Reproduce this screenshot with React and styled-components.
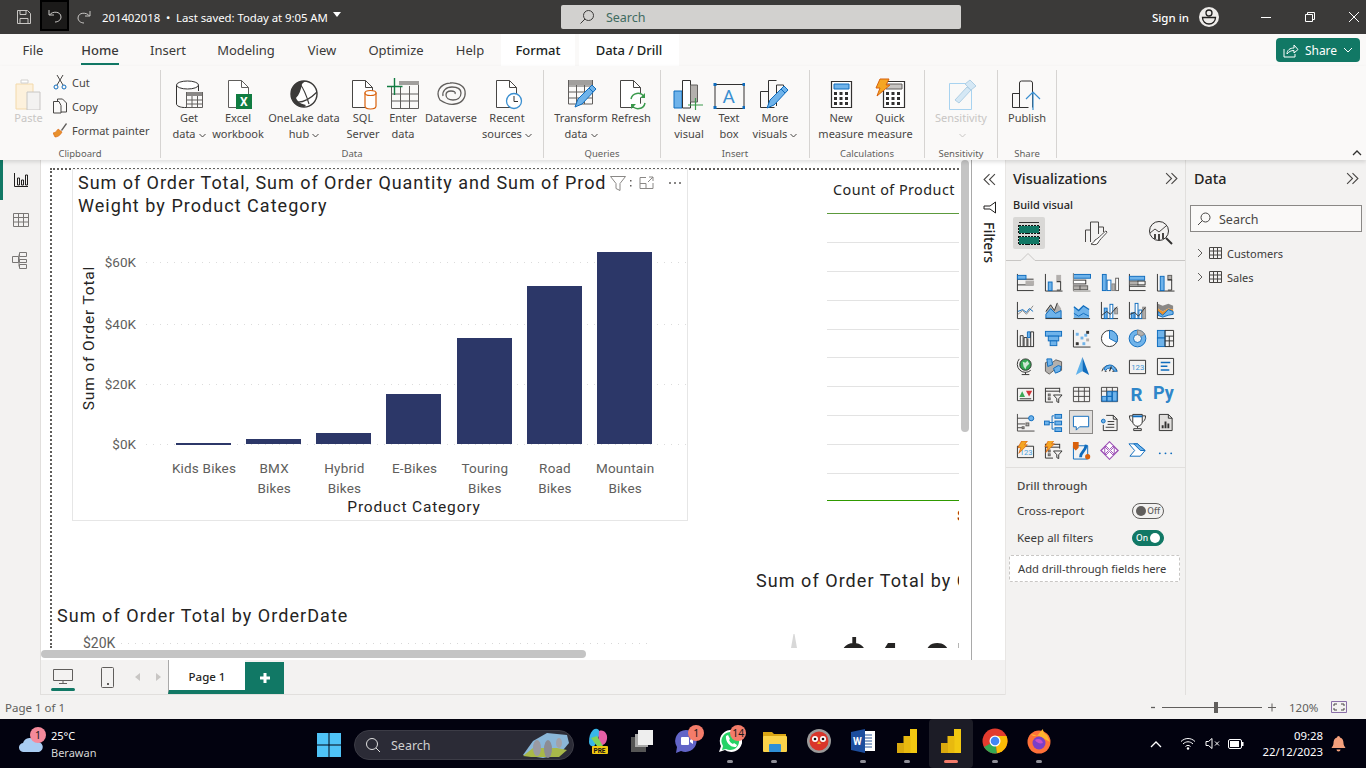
import React from 'react';
import styled, { createGlobalStyle } from 'styled-components';

const Global = createGlobalStyle`
  html, body { margin: 0; padding: 0; background: #f3f2f1; }
  body { font-family: "Noto Sans", "Open Sans", sans-serif; color: #252423; overflow: hidden; }
  * { box-sizing: border-box; }
`;
const D = '#323130', B = '#6fb3ea', BD = '#0f6cbd', G = '#b3b0ad', GREEN = '#117865';
const Din = `Roboto, "Liberation Sans", sans-serif`;

const Page = styled.div`width:1366px;height:768px;display:flex;flex-direction:column;overflow:hidden;`;

/* ---------- title bar ---------- */
const TitleBar = styled.header`height:34px;flex:none;background:#3b3a39;color:#fff;display:flex;align-items:flex-start;position:relative;`;
const TitleIcon = styled.div`width:${p => p.$w}px;height:${p => p.$h || 34}px;margin-left:${p => p.$ml || 0}px;display:flex;align-items:center;justify-content:center;flex:none;
  ${p => p.$on ? 'background:#1b1a19;border:2px solid #000;' : ''}`;
const DocTitle = styled.div`margin-left:10px;width:246px;height:34px;display:flex;align-items:center;font-size:11.4px;white-space:nowrap;letter-spacing:-.05px;`;
const Caret = styled.span`width:0;height:0;border-left:4.5px solid transparent;border-right:4.5px solid transparent;border-top:5px solid #fff;margin:-6px 0 0 5px;flex:none;`;
const TopSearch = styled.div`margin:5px 0 0 220px;width:400px;height:24px;background:#d2d1cf;border-radius:2px;display:flex;align-items:center;padding-left:18px;gap:11px;color:#3f6b60;font-size:12.5px;flex:none;`;
const TitleRight = styled.div`margin-left:191px;display:flex;align-items:center;height:34px;flex:none;`;
const SignIn = styled.span`font-size:11.5px;font-weight:500;white-space:nowrap;width:37px;`;
const WinBtn = styled.div`width:44px;height:34px;display:flex;align-items:center;justify-content:center;`;
const Avatar = styled.div`width:20px;height:20px;margin:0 25px 0 10px;`;

/* ---------- tabs ---------- */
const TabBar = styled.nav`height:32px;flex:none;background:#faf9f8;display:flex;padding-left:10px;position:relative;`;
const Tab = styled.div`width:${p => p.$w}px;margin-left:${p => p.$ml || 0}px;height:32px;display:flex;align-items:center;justify-content:center;font-size:13px;position:relative;
  font-weight:${p => p.$strong ? 500 : 400};color:${p => p.$ctx ? '#201f1e' : '#3b3a39'};
  background:${p => p.$ctx ? '#fff' : 'transparent'};`;
const TabLine = styled.span`position:absolute;left:25px;right:25px;bottom:1px;height:2px;background:${GREEN};`;
const ShareBtn = styled.button`position:absolute;left:1276px;top:4px;width:84px;height:24px;background:${GREEN};border:0;border-radius:4px;color:#fff;font:400 12px "Noto Sans",sans-serif;display:flex;align-items:center;justify-content:center;gap:6px;padding:0;`;

/* ---------- ribbon ---------- */
const Ribbon = styled.section`height:94px;flex:none;background:#faf9f8;display:flex;padding-top:4px;position:relative;z-index:2;box-shadow:0 2px 4px rgba(0,0,0,.13);`;
const Group = styled.div`width:${p => p.$w}px;height:88px;flex:none;border-right:1px solid #d6d4d2;display:flex;flex-direction:column;`;
const Row = styled.div`height:75px;display:flex;padding-left:${p => p.$pl || 0}px;`;
const GroupLabel = styled.div`height:13px;line-height:17px;text-align:center;font-size:9.5px;color:#605e5c;`;
const RBtn = styled.div`width:${p => p.$w}px;flex:none;display:flex;flex-direction:column;align-items:center;padding-top:8px;color:${p => p.$off ? '#c8c6c4' : '#484644'};font-size:11px;line-height:16px;white-space:nowrap;`;
const RIcon = styled.svg`width:32px;height:32px;flex:none;display:block;`;
const Chev = styled.svg`width:7px;height:5px;margin-left:3px;`;
const SmallCol = styled.div`display:flex;flex-direction:column;`;
const SmallBtn = styled.div`height:24px;display:flex;align-items:center;gap:5px;font-size:11px;color:#484644;white-space:nowrap;`;
const Collapse = styled.svg`position:absolute;left:1352px;top:84px;`;

/* ---------- main ---------- */
const Main = styled.main`height:535px;flex:none;display:flex;`;
const Rail = styled.aside`width:41px;flex:none;background:#f3f2f1;border-right:1px solid #e1dfdd;display:flex;flex-direction:column;`;
const RailItem = styled.div`height:40px;display:flex;align-items:center;justify-content:center;border-left:3px solid ${p => p.$on ? GREEN : 'transparent'};padding-right:1px;`;
const Center = styled.div`width:964px;flex:none;display:flex;flex-direction:column;`;
const Work = styled.div`height:500px;display:flex;background:#fff;`;
const Canvas = styled.div`width:931px;flex:none;position:relative;border-right:1px solid #a9a9a9;`;
const Clip = styled.div`position:absolute;left:0;top:0;width:918px;height:488px;overflow:hidden;`;
const Selection = styled.div`position:absolute;left:9px;top:8px;right:0;bottom:0;border-top:2px dotted #605e5c;border-left:2px dotted #605e5c;`;
const VisualCard = styled.article`position:absolute;left:31px;top:9px;width:616px;height:352px;background:#fff;border:1px solid #e6e6e6;border-top-color:#f2f2f2;display:flex;flex-direction:column;`;
const CardHead = styled.div`height:49px;padding:1px 0 0 5px;position:relative;flex:none;`;
const CardTitle = styled.div`width:529px;overflow:hidden;white-space:nowrap;font:400 18px/23px ${Din};letter-spacing:.96px;color:#252423;`;
const TitleLine2 = styled.span`letter-spacing:1.04px;`;
const HeadIcons = styled.div`position:absolute;left:536px;top:3px;display:flex;align-items:center;height:20px;`;
const HeadIcon = styled.svg`margin-left:${p => p.$ml || 0}px;flex:none;`;
const Chart = styled.svg`width:614px;height:301px;display:block;`;
const TableVisual = styled.div`position:absolute;left:786px;top:16px;width:132px;`;
const TableHead = styled.div`height:38px;padding:3px 0 0 6px;font-size:14.4px;line-height:22px;letter-spacing:.44px;border-bottom:1px solid #5c9a3c;white-space:nowrap;color:#252423;`;
const TableRow = styled.div`height:${p => p.$h || 29}px;border-bottom:1px solid #e3e3e3;`;
const TableTotal = styled.div`height:27px;border-bottom:1.5px solid #2f9a00;`;
const TotalCell = styled.div`height:30px;padding-left:130px;font:700 14px/30px ${Din};color:#8f2a10;overflow:hidden;white-space:nowrap;`;
const FloatTitle = styled.div`position:absolute;left:${p => p.$x}px;top:${p => p.$y}px;white-space:nowrap;font:400 18px/23px ${Din};letter-spacing:1.05px;color:#252423;`;
const AxisLabel = styled.div`position:absolute;left:42px;top:474px;font:400 14px/18px ${Din};color:#605e5c;`;
const GridDots = styled.div`position:absolute;left:80px;top:483px;width:530px;height:1px;background:repeating-linear-gradient(90deg,#d8d8d8 0 1px,transparent 1px 7px);`;
const BigNum = styled.div`position:absolute;left:798px;top:474px;font:700 50px/56px ${Din};letter-spacing:4px;color:#252423;white-space:nowrap;`;
const Tip = styled.svg`position:absolute;left:749px;top:474px;`;
const VScroll = styled.div`position:absolute;left:920px;top:0;width:8px;height:272px;background:#c4c4c4;border-radius:4px;`;
const HScroll = styled.div`position:absolute;left:0;top:490px;width:545px;height:8px;background:#c4c4c4;border-radius:4px;`;
const FilterPane = styled.div`width:33px;flex:none;background:#fff;display:flex;flex-direction:column;align-items:center;padding:13px 0 0 1px;`;
const FilterFunnel = styled.svg`margin-top:15px;flex:none;`;
const FilterLabel = styled.div`writing-mode:vertical-rl;font-size:14px;font-weight:500;margin-top:8px;color:#252423;`;
const PageBar = styled.div`height:35px;flex:none;background:#f3f2f1;display:flex;border-bottom:1px solid #e1dfdd;`;
const DeviceTab = styled.div`width:${p => p.$w}px;margin-left:${p => p.$ml || 0}px;height:34px;position:relative;display:flex;align-items:center;justify-content:center;flex:none;`;
const DeviceLine = styled.span`position:absolute;left:0;right:0;top:28px;height:3px;border-radius:2px;background:${GREEN};`;
const NavArrows = styled.div`width:40px;margin-left:14px;display:flex;justify-content:space-around;align-items:center;flex:none;`;
const PageTab = styled.div`width:77px;height:34px;background:#fff;border-left:1px solid #a9a9a9;border-bottom:4px solid ${GREEN};font-size:11.5px;font-weight:500;display:flex;align-items:center;justify-content:center;padding-top:3px;flex:none;`;
const AddTab = styled.div`width:39px;height:32px;margin-top:2px;background:${GREEN};display:flex;align-items:center;justify-content:center;flex:none;`;

/* ---------- panes ---------- */
const VizPane = styled.section`width:181px;flex:none;background:#f3f2f1;border-right:1px solid #e1dfdd;border-left:1px solid #e8e6e4;display:flex;flex-direction:column;`;
const PaneHead = styled.div`height:38px;display:flex;align-items:center;justify-content:space-between;padding:0 7px 1px ${p => p.$pl}px;font-size:14.4px;font-weight:500;color:#252423;`;
const BuildLabel = styled.div`font-size:11px;font-weight:500;height:19px;line-height:13px;padding-left:7px;color:#252423;`;
const ModeRow = styled.div`display:flex;padding-left:7px;height:32px;`;
const ModeBtn = styled.div`width:32px;height:32px;margin-left:${p => p.$ml || 0}px;display:flex;align-items:center;justify-content:center;border-radius:2px;background:${p => p.$on ? '#d9d8d6' : 'transparent'};flex:none;`;
const Notch = styled.svg`display:block;width:179px;height:12px;`;
const VizGrid = styled.div`display:grid;grid-template-columns:repeat(6,28px);grid-auto-rows:28px;padding:7px 0 0 5px;height:207px;flex:none;border-bottom:1px solid #e1dfdd;`;
const VizCell = styled.div`display:flex;align-items:center;justify-content:center;${p => p.$on ? 'background:#e1dfdd;border:1px solid #8a8886;width:24px;height:24px;margin:2px;' : ''}`;
const SectionHead = styled.div`padding:10px 0 0 11px;font-size:11.5px;font-weight:500;color:#484644;height:29px;`;
const OptionRow = styled.div`height:27px;display:flex;align-items:center;justify-content:space-between;padding:0 21px 0 11px;font-size:11.5px;color:#3b3a39;`;
const Toggle = styled.div`width:32px;height:16px;border-radius:8px;display:flex;align-items:center;justify-content:space-between;padding:0 3px;font-size:8.5px;font-weight:500;
  background:${p => p.$on ? GREEN : 'transparent'};color:${p => p.$on ? '#fff' : '#605e5c'};border:1px solid ${p => p.$on ? GREEN : '#605e5c'};`;
const Knob = styled.span`width:10px;height:10px;border-radius:50%;background:${p => p.$on ? '#fff' : '#605e5c'};flex:none;`;
const DropBox = styled.div`margin:4px 0 0 3px;width:171px;height:27px;background:#fff;border:1px dashed #c8c6c4;border-radius:2px;font-size:11.2px;color:#3b3a39;display:flex;align-items:center;padding-left:8px;white-space:nowrap;`;
const DataPane = styled.section`width:180px;flex:none;background:#f3f2f1;display:flex;flex-direction:column;`;
const DataSearch = styled.div`margin:7px 0 0 4px;width:172px;height:27px;border:1px solid #8a8886;background:#faf9f8;display:flex;align-items:center;padding:1px 0 0 6px;gap:8px;font-size:12.5px;color:#484644;`;
const Tree = styled.div`margin-top:9px;display:flex;flex-direction:column;`;
const TreeRow = styled.div`height:24px;display:flex;align-items:center;padding-left:11px;gap:5px;font-size:11px;color:#3b3a39;`;

/* ---------- status + taskbar ---------- */
const Status = styled.footer`height:24px;flex:none;background:#f3f2f1;display:flex;align-items:center;padding-left:5px;font-size:11.5px;color:#605e5c;position:relative;`;
const ZoomBar = styled.div`position:absolute;left:1150px;top:0;height:24px;display:flex;align-items:center;color:#605e5c;`;
const Slider = styled.div`width:100px;height:1px;background:#605e5c;margin:0 6px;position:relative;`;
const Thumb = styled.span`position:absolute;left:52px;top:-5px;width:4px;height:11px;background:#605e5c;`;
const Pct = styled.span`margin:0 0 0 12px;font-size:11.5px;width:42px;`;
const Taskbar = styled.div`height:49px;flex:none;background:#02020f;color:#fff;display:flex;align-items:center;position:relative;`;
const Weather = styled.div`width:317px;height:49px;flex:none;display:flex;align-items:center;padding-left:19px;gap:7px;position:relative;`;
const Badge = styled.span`position:absolute;left:${p => p.$x}px;top:${p => p.$y}px;min-width:16px;height:16px;padding:0 2px;border-radius:8px;background:${p => p.$c || '#f28b82'};color:#1b1a19;font-size:10.5px;line-height:16px;text-align:center;`;
const WeatherText = styled.div`font-size:11px;line-height:17px;`;
const WeatherSub = styled.div`color:#d6d6d6;`;
const StartBtn = styled.svg`width:24px;height:24px;flex:none;margin-top:2px;`;
const TaskSearch = styled.div`margin:3px 0 0 13px;width:220px;height:30px;border-radius:15px;background:#2b2b36;border:1px solid #3c3c46;display:flex;align-items:center;padding-left:10px;gap:10px;color:#d0d0d0;font-size:12.5px;position:relative;flex:none;`;
const SearchArt = styled.svg`position:absolute;right:2px;top:0;`;
const Dock = styled.div`display:flex;margin-left:2px;flex:none;`;
const DockItem = styled.div`width:44.1px;height:49px;position:relative;display:flex;align-items:center;justify-content:center;padding-bottom:5px;flex:none;
  ${p => p.$active ? 'background:#1c1c26;border-radius:4px;' : ''}`;
const DockDot = styled.span`position:absolute;left:50%;bottom:5px;height:3px;margin-left:${p => p.$active ? -7 : -3}px;width:${p => p.$active ? 14 : 6}px;border-radius:2px;background:${p => p.$active ? '#f47c6a' : '#8f8f98'};`;
const Tray = styled.div`position:absolute;left:1144px;top:0;width:222px;height:49px;display:flex;align-items:center;`;
const TrayIcon = styled.div`width:${p => p.$w || 24}px;display:flex;justify-content:center;flex:none;margin-left:${p => p.$ml || 0}px;`;
const Clock = styled.div`width:68px;text-align:right;font-size:11.4px;line-height:16px;margin-left:7px;flex:none;white-space:nowrap;`;

/* ---------- icon helpers ---------- */
const P = ({ d, c = D, w = 1, f = 'none' }) => <path d={d} fill={f} stroke={c} strokeWidth={w} />;
const R = ({ x, y, w, h, f = B, s = BD }) => <rect x={x + .5} y={y + .5} width={w} height={h} fill={f} stroke={s} />;
const V = ({ children, size = 19 }) => <svg width={size} height={size} viewBox="0 0 20 20">{children}</svg>;
const Ax = () => <P d="M1.5 1v17.5H19" />;
const Tx = ({ x, y, s, c, w = 700, f = 'Roboto, sans-serif', children }) => <text x={x} y={y} fontSize={s} fill={c} fontWeight={w} fontFamily={f}>{children}</text>;

const Bolt = ({ x = 0, y = 0 }) => <path transform={`translate(${x} ${y})`} d="M5 0h6L8 4h3L2 13l2-6H1z" fill="#f5a623" stroke="#d9610c" strokeWidth=".8" />;
const Card123 = () => <><P d="M1.5 5.5h17v12h-17z" /><Tx x="4" y="15" s="8" c="#4a9fdc" w="400">123</Tx></>;
const SlicerBase = () => <><P d="M1.5 3.5h15M1.5 6.5h15M1.5 3v15h8M16.5 3v5" /><R x={4} y={9} w={2} h={2} f={G} s="#605e5c" /><R x={4} y={13} w={2} h={2} f={G} s="#605e5c" /><P d="M10 10.5h9l-3.5 4v4l-2-1v-3z" /></>;

const vizIcons = [
  <V><P d="M1.5 1v18M1.5 6.5h17M1.5 18.5h17M1.5 12.5h17" /><R x={1} y={2} w={9} h={4} /><R x={10} y={8} w={8} h={4} f={G} s={G} /></V>,
  <V><P d="M1.5 1v18h18" /><R x={4} y={9} w={4} h={9} /><R x={13} y={2} w={4} h={7} f={G} s={G} /><P d="M13.5 9h4v9h-4" /></V>,
  <V><R x={1} y={1} w={18} h={4} /><R x={1} y={7} w={13} h={4} f="#fff" s="#323130" /><R x={1} y={13} w={7} h={4} f={G} s="#605e5c" /><R x={8} y={13} w={8} h={4} f={G} s="#605e5c" /><P d="M1.5 0v19h18" c="#8a8886" /></V>,
  <V><R x={2} y={1} w={4} h={17} /><R x={7} y={7} w={4} h={11} f="#fff" /><R x={12} y={11} w={3} h={7} f={G} s="#8a8886" /><R x={16} y={5} w={3} h={13} f="#fff" s="#605e5c" /></V>,
  <V><P d="M1.5 1v18M1.5 18.5h17" /><R x={1} y={3} w={16} h={4} /><R x={1} y={8} w={9} h={4} f={G} s="#605e5c" /><P d="M10 8.5h8v4h-8" /><P d="M1.5 14h17" /></V>,
  <V><P d="M1.5 1v18h18" /><R x={4} y={3} w={4} h={15} /><R x={12} y={2} w={4} h={5} f={G} s="#605e5c" /><P d="M12.5 7h4v11h-4" /></V>,
  <V><Ax /><P d="M2 14l5-4 4 4 7-9" c="#8a8886" /><P d="M2 11l5-2 4 3 3-4 4 3" c={BD} /></V>,
  <V><path d="M2 18V10l5-6 4 6 3-8 4 6v10z" fill={G} /><path d="M2 18v-4l5-6 5 5 6-3v8z" fill={B} stroke={BD} /><P d="M1.5 18.5H19" /><P d="M2 11l5-7 4 6 3-8" /></V>,
  <V><path d="M2 18V6l5 4 5-5 6 4v9z" fill={B} /><P d="M2 6l5 4 5-5 6 4" c={BD} w={1.4} /><P d="M2 13l5 3 5-3 6 3" c={BD} /><P d="M1.5 18.5H19" /></V>,
  <V><Ax /><R x={4} y={7} w={3} h={11} /><R x={10} y={3} w={3} h={15} f="#fff" /><R x={15} y={7} w={3} h={6} f={G} s="#8a8886" /><P d="M2 15l5-4 4 3 7-8" /></V>,
  <V><Ax /><R x={3} y={12} w={3} h={6} f={B} /><R x={7} y={2} w={3} h={16} f="#fff" /><R x={11} y={9} w={3} h={9} f="#fff" /><R x={15} y={6} w={3} h={12} f={G} s="#8a8886" /><P d="M2 14l5-2 4 4 7-9" /></V>,
  <V><path d="M2 3l5 2 6-2 5 2v4l-5-1-6 3-5-3z" fill="#8a8886" /><path d="M2 8l5 3 6-3 5 1v4l-5-1-6 3-5-2z" fill="#e8912d" /><path d="M2 11l5 4 6-6 5 2v3l-5 1-6 2-5-2z" fill={B} stroke={BD} /><Ax /></V>,
  <V><Ax /><P d="M4.5 18V7h3v11M8.5 18V9h3v9" /><path d="M12 9V3h3v6z" fill={B} stroke={BD} /><P d="M15.5 18V3h3v15M12.5 18V10" /></V>,
  <V><R x={1} y={2} w={17} h={5} /><R x={4} y={7} w={11} h={5} /><R x={6} y={12} w={7} h={5} /></V>,
  <V><P d="M1.5 1v18h18" /><R x={4} y={14} w={2} h={2} f={D} s={D} /><R x={4} y={4} w={2} h={2} f={B} s={B} /><R x={9} y={8} w={2} h={2} f={B} s={B} /><R x={13} y={5} w={2} h={2} f={B} s={B} /><R x={15} y={10} w={2} h={2} f={G} s={G} /><R x={11} y={14} w={2} h={2} f={B} s={B} /><R x={15} y={2} w={2} h={2} f={D} s={D} /></V>,
  <V><circle cx="10" cy="10" r="8.5" fill="#fff" stroke={D} /><path d="M10 10V1.5A8.5 8.5 0 0 1 17.5 14z" fill={B} stroke={BD} /></V>,
  <V><circle cx="10" cy="10" r="8.800" fill={B} stroke={BD} /><circle cx="10" cy="10" r="4.200" fill="#f3f2f1" stroke={BD} /><path d="M10 1.200A8.800 8.800 0 0 1 17.500 5.500L13.500 7.600A4.200 4.200 0 0 0 10 5.800z" fill={G} stroke="#8a8886" /></V>,
  <V><R x={1} y={1} w={8} h={8} /><R x={1} y={9} w={8} h={9} /><P d="M9.5 1.5h9v17h-9zM9.5 7.5h9M14 7.5v11M9.5 12.5h9" /></V>,
  <V><circle cx="10" cy="8" r="6" fill="#34a853" stroke="#323130" /><path d="M7 5l3 1 2-2 2 3-3 3-1 3-2-3z" fill="#cfe8d6" /><P d="M3.5 2a8.5 8.5 0 0 0 12 12M10 16v2M6 18.5h8" /></V>,
  <V><path d="M1.5 6l5-2 2 2 4-3 6 2v9l-5 2-3-2-5 4-4-3z" fill={G} stroke="#605e5c" /><path d="M3 2h5l1 6-5 2z" fill={B} stroke={BD} /><path d="M10 12l5-3 3 1-1 5-5 2z" fill={B} stroke={BD} /></V>,
  <V><path d="M11 0L4 19l7-4z" fill="#5fb2ec" /><path d="M11 0l7 19-7-4z" fill="#0f6cbd" /></V>,
  <V><P d="M2 15a8.3 8.3 0 0 1 16 0" w={1} /><path d="M4 13a6.5 6.5 0 0 1 12-1l2 3h-3a5 5 0 0 0-9-1z" fill={B} stroke={BD} /><P d="M5 15h2M13 15h2M10 15l2-5" c={D} w={1.2} /></V>,
  <V><P d="M1.5 3.5h17v14h-17z" /><Tx x="3.4" y="14" s="8.2" c="#3f94d3" w="400">123</Tx></V>,
  <V><P d="M1.5 1.5h17v17h-17z" /><path d="M5 5h10v1.6H5zM5 9h7v1.6H5zM5 13h9v1.6H5z" fill={BD} /></V>,
  <V><P d="M1.5 3.500h17v13h-17zM4 14.500h12" /><path d="M3.500 12.500l3-6 3 6z" fill="#3aa655" /><path d="M10.500 6h6.500l-3.200 6z" fill="#d13438" /></V>,
  <V><SlicerBase /></V>,
  <V><P d="M1.500 2.500h17v15h-17zM1.500 6.500h17M1.500 12h17M7 2.500v15M13 2.500v15" c="#484644" /></V>,
  <V><P d="M1.500 2.500h17v15h-17zM1.500 6.500h17M7 2.500v15M13 2.500v15" c="#484644" /><path d="M2 12h5v5H2zM7.500 7h5v5h-5zM13 7h5v10h-5zM7.500 12h5v5h-5z" fill={B} stroke={BD} /></V>,
  <V size={22}><Tx x="4" y="16" s="17" c="#2f86c9">R</Tx></V>,
  <V size={24}><Tx x="0" y="14" s="15" c="#2f86c9">Py</Tx></V>,
  <V><P d="M1.500 1v18h18M1.500 5.500h13M1.500 11.500h8M1.500 15.500h5" c="#484644" /><circle cx="16" cy="5.500" r="2.700" fill={B} stroke={BD} /><R x={10} y={10} w={3} h={3} f={G} s="#605e5c" /><R x={6} y={14} w={2} h={2} f={G} s="#605e5c" /></V>,
  <V><R x={0} y={8} w={5} h={4} /><P d="M5.500 10h3M8.500 3v14M8.500 3h2M8.500 10h2M8.500 17h2" c={BD} /><R x={11} y={1} w={7} h={4} /><R x={11} y={8} w={7} h={4} /><R x={11} y={15} w={7} h={4} /></V>,
  <V><path d="M1.500 3.500h16v11H8l-3.500 3.500v-3.500h-3z" fill="#fff" stroke={BD} /></V>,
  <V><P d="M6.500 2.500H14l4 4v12H3.500v-6M14 2.500v4h4M8 9h7M8 12h7M6 15h9" /><circle cx="3.500" cy="8.500" r="2" fill={B} stroke={BD} /></V>,
  <V><P d="M5 3H1.500c0 4 1.500 6 4.500 7M15 3h3.500c0 4-1.500 6-4.500 7M10 13v3M6 18.500h8v-2H6z" /><path d="M5 1.500h10V9a5 5 0 0 1-10 0z" fill="#fff" stroke={D} /><P d="M5 3.500h10" c={BD} w={2} /></V>,
  <V><path d="M3 2h10l4 4v13H3z" fill="#e1dfdd" /><P d="M3.500 1.500H13l4 4v13H3.500zM13 1.500v4h4" /><path d="M6 16v-3h2v3zM9 16V9h2v7zM12 16v-5h2v5z" fill={D} /></V>,
  <V><Card123 /><Bolt x={1} y={0} /></V>,
  <V><SlicerBase /><Bolt x={0} y={-1} /></V>,
  <V><P d="M1.500 5v14h15V5z" c={BD} /><P d="M9 17c0-6 5-5 6-13" c={BD} w={3} /><path d="M1 1h6v6l-3 3-3-3z" fill="#d9610c" /><circle cx="16.500" cy="16.500" r="2.700" fill="#d9610c" /></V>,
  <V><path d="M10 1l9 9-9 9-9-9z" fill="#fff" stroke="#9c4fb5" strokeWidth="1.500" /><path d="M10 1l4 4-4 4-4-4zM5 6l4 4-4 4zM15 6v8l-4-4zM10 11l4 4-4 4-4-4z" fill="#fff" stroke="#9c4fb5" /></V>,
  <V><path d="M1 3h9l8 7-5 6H2l5-6z" fill="#fff" stroke={BD} /><path d="M10 3l8 7-5 0-7-7z" fill={B} stroke={BD} /></V>,
  <V><circle cx="4" cy="13" r="1" fill={BD} /><circle cx="10" cy="13" r="1" fill={BD} /><circle cx="16" cy="13" r="1" fill={BD} /></V>,
];

const Page32 = ({ children }) => <><P d="M5.500 2.500h13l7 7v20h-20z" c="#484644" f="#fff" /><P d="M18.500 2.500v7h7" c="#484644" />{children}</>;
const ChevD = ({ c = '#484644' }) => <Chev viewBox="0 0 7 5"><path d="M.5 1l3 3 3-3" fill="none" stroke={c} /></Chev>;
const Pencil = ({ x = 0, y = 0 }) => <g transform={`translate(${x} ${y})`}><path d="M4 20L1 28l7-3L22 10l-4-4z" fill="#6fb3ea" stroke={BD} /><path d="M15 9l4 4" stroke={BD} /></g>;
const Grid32 = ({ y = 4 }) => <><path d={`M3 ${y}h24v5H3z`} fill="#a19f9d" /><P d={`M3.500 ${y}v24h24v-24M3.500 ${y + 6}h24M3.500 ${y + 12}h24M3.500 ${y + 18}h24M11.500 ${y + 5}v19M19.500 ${y + 5}v19`} c="#605e5c" /></>;
const Calc = ({ x = 6, w = 20, hi = B }) => <><P d={`M${x + .5} 3.500h${w}v26h-${w}z`} c="#323130" w={1.2} f="#fff" /><path d={`M${x + 3} 6h${w - 5}v5h-${w - 5}z`} fill={hi} stroke={hi === B ? BD : '#605e5c'} />{[14, 19, 24].map(y => [0, 1, 2].map(i => <rect key={`${y}${i}`} x={x + 3 + i * 5.500} y={y} width="3" height="3" fill="#323130" />))}</>;

const ribbonIcons = {
  get: <RIcon viewBox="0 0 32 32"><P d="M3.500 7v19c0 2 4 3.500 8 3.500h3M25.500 7v6" c="#323130" /><ellipse cx="14.500" cy="7" rx="11" ry="4" fill="#fff" stroke="#323130" /><path d="M13 14h16v4H13z" fill="#8a8886" /><P d="M13.500 14v15.500h16V14M13.500 22h16M13.500 26h16M19 18v12M24.500 18v12" c="#605e5c" /></RIcon>,
  excel: <RIcon viewBox="0 0 32 32"><P d="M6.500 2.500h13l7 7v20h-20z" c="#605e5c" f="#fff" /><P d="M19.500 2.500v7h7" c="#605e5c" /><rect x="14" y="16" width="16" height="15" fill="#107c41" /><Tx x="18" y="28" s="12" c="#fff">X</Tx></RIcon>,
  lake: <RIcon viewBox="0 0 32 32"><circle cx="16" cy="16" r="13" fill="#fff" stroke="#3b3a39" strokeWidth="1.400" /><path d="M16 3C8 3 2.500 9 3 17c.5 7 6 12 13 12l2-2c-5-1-8-3-10-7 3-3 5-8 6-14 1-1 2-2 4-3z" fill="#3b3a39" /><path d="M12 6c4 5 6 10 9 20M8 24c7 1 15-4 21-10" fill="none" stroke="#3b3a39" strokeWidth="1.200" /></RIcon>,
  sql: <RIcon viewBox="0 0 32 32"><Page32 /><path d="M18 15v13c0 2 2.500 3 5.500 3s5.500-1 5.500-3V15z" fill="#fff" stroke="#d9610c" strokeWidth="1.200" /><ellipse cx="23.500" cy="15" rx="5.500" ry="2.500" fill="#fff" stroke="#d9610c" strokeWidth="1.200" /></RIcon>,
  enter: <RIcon viewBox="0 0 32 32"><path d="M12 3h20v4H12z" fill="#a19f9d" /><P d="M4.500 8v22.500h27V7M4.500 16h27M4.500 23h27M13.500 8v22M22.500 8v22" c="#605e5c" /><P d="M7.500 0v17M0 8.500h15.500" c="#107c41" w={1.400} /></RIcon>,
  verse: <RIcon viewBox="0 0 32 32"><path d="M5 22C0 14 5 6 15 5c6-1 14 2 15 8 1 7-3 12-10 13-4 1-9 0-15-4z" fill="none" stroke="#605e5c" strokeWidth="1.300" /><path d="M8 18c-1-5 3-9 9-9 5 0 9 2 9 6 0 5-4 7-8 7-4 0-7-2-7-5 0-3 2-4 5-4 3 0 5 1 4 3" fill="none" stroke="#605e5c" strokeWidth="1.300" /></RIcon>,
  recent: <RIcon viewBox="0 0 32 32"><Page32 /><circle cx="23" cy="23" r="7.500" fill="#fff" stroke="#3a8fd0" strokeWidth="1.300" /><P d="M23 18v5.500h4" c="#323130" /></RIcon>,
  transform: <RIcon viewBox="0 0 32 32"><Grid32 y={2} /><Pencil x={9} y={1} /></RIcon>,
  refresh: <RIcon viewBox="0 0 32 32"><Page32 /><path d="M16 21a7 7 0 0 1 13-2M30 25a7 7 0 0 1-13 2" fill="#fff" stroke="#3a9a4c" strokeWidth="1.500" /><path d="M30 15v5h-5zM16 31v-5h5z" fill="#3a9a4c" /></RIcon>,
  newv: <RIcon viewBox="0 0 32 32"><path d="M1 13h8v17H1z" fill={B} stroke={BD} /><P d="M9.500 30V2.500h8V30z" c="#323130" f="#fff" /><path d="M17.500 7h7v17h-7z" fill={G} stroke="#605e5c" /><P d="M22.500 20v14M15 27h15" c="#3a9a4c" w={1.200} /></RIcon>,
  text: <RIcon viewBox="0 0 32 32"><P d="M2 6.500h29v24H2z" c="#323130" /><g fill={BD}><rect x=".5" y="5" width="3" height="3" /><rect x="29.500" y="5" width="3" height="3" /><rect x=".5" y="28" width="3" height="3" /><rect x="29.500" y="28" width="3" height="3" /></g><Tx x="9.500" y="25" s="19" c="#3a8fd0" w="400">A</Tx></RIcon>,
  more: <RIcon viewBox="0 0 32 32"><P d="M1.500 29.500v-16h8M9.500 29.500V2.500h8M17.500 28V7h7v8M1.500 29.500h14" c="#323130" /><Pencil x={7} y={2} /></RIcon>,
  measure: <RIcon viewBox="0 0 32 32"><Calc /></RIcon>,
  quick: <RIcon viewBox="0 0 32 32"><Calc x={9} w={21} hi="#c8c6c4" /><path d="M6 1h9l-3 6h4L3 18l3-8H2z" fill="#f5a623" stroke="#d9610c" /></RIcon>,
  sens: <RIcon viewBox="0 0 32 32"><P d="M4.500 5.500h22v26h-22z" c="#a8d3f0" /><path d="M10 22L22 9l4 3-12 13z" fill="#d5e8f5" stroke="#b0cfe4" /><path d="M20 6l5-4 6 6-5 4z" fill="#d5e8f5" stroke="#b0cfe4" /></RIcon>,
  publish: <RIcon viewBox="0 0 32 32"><P d="M1.500 15.500h7v14h-7zM8.500 29.500V5a2 2 0 0 1 2-2h9a2 2 0 0 1 2 2v24.500M8.500 29.500h9" c="#323130" /><P d="M22 14v18M15 21l7-7 7 7" c="#3a8fd0" w={1.200} /></RIcon>,
  paste: <RIcon viewBox="0 0 32 32"><path d="M3 6h17v25H3z" fill="#fdf1dc" stroke="#f3d9aa" /><path d="M8 5h7V2h-7z" fill="#fff" stroke="#d2d0ce" /><path d="M14 14h13v18H14z" fill="#f3f2f1" stroke="#c8c6c4" /></RIcon>,
};

const RibbonBtn = ({ w, icon, lines, chev, off }) => (
  <RBtn $w={w} $off={off}>
    {ribbonIcons[icon]}
    <span>{lines[0]}</span>
    <span>{lines[1]}{chev && <ChevD c={off ? '#c8c6c4' : '#484644'} />}</span>
  </RBtn>
);

const DoubleChev = ({ left }) => <svg width="13" height="13" viewBox="0 0 12 12"><P d={left ? 'M6 1L1 6l5 5M11 1L6 6l5 5' : 'M1 1l5 5-5 5M6 1l5 5-5 5'} c="#484644" /></svg>;

const dock = [
  { d: <svg width="24" height="26" viewBox="0 0 24 26"><path d="M7 2c4-3 8 0 6 6l-4 9c-2 3-6 1-6-3 0-5 1-9 4-12z" fill="#38b7e8" /><path d="M13 3c5-2 9 3 8 8-1 6-5 7-9 6z" fill="#e65fa5" /><path d="M5 10l6 8h6l-6-10z" fill="#7fd45b" /><rect x="6" y="18" width="16" height="8" rx="1" fill="#f2c811" /><text x="7.500" y="24.500" fontSize="6.500" fontWeight="700" fontFamily="Roboto" fill="#111">PRE</text></svg> },
  { d: <svg width="24" height="24" viewBox="0 0 24 24"><rect x="1" y="8" width="15" height="15" fill="#555" /><rect x="5" y="5" width="13" height="13" fill="#aaa" /><rect x="8" y="1" width="15" height="15" fill="#eee" /></svg> },
  { d: <svg width="24" height="24" viewBox="0 0 24 24"><path d="M12 1a11 11 0 1 1-5 21l-5 2 1-6A11 11 0 0 1 12 1z" fill="#6264c7" /><rect x="7" y="8" width="8" height="8" rx="1" fill="#fff" /><path d="M16 11l3-2v6l-3-2z" fill="#fff" /></svg>, badge: '1', bx: 24, dot: false },
  { d: <svg width="24" height="24" viewBox="0 0 24 24"><path d="M12 1a11 11 0 1 1-5 20l-6 2 2-6A11 11 0 0 1 12 1z" fill="#fff" /><path d="M12 3a9 9 0 1 1-4 17l-4 1 1-4A9 9 0 0 1 12 3z" fill="#25d366" /><path d="M8 7l2-1 2 4-1 1c1 2 2 3 4 4l1-1 3 2-1 2c-5 1-11-5-10-11z" fill="#fff" /></svg>, badge: '14', bx: 22, dot: true },
  { d: <svg width="25" height="24" viewBox="0 0 25 24"><path d="M1 3h9l2 2h12v4H1z" fill="#d9a514" /><rect x="1" y="7" width="24" height="16" rx="1" fill="#fbd34a" /><rect x="7" y="15" width="12" height="8" rx="1" fill="#2f8fd6" /></svg>, dot: true },
  { d: <svg width="24" height="24" viewBox="0 0 24 24"><circle cx="12" cy="12" r="12" fill="#9a9a9a" /><circle cx="12" cy="12" r="9.500" fill="#d9362b" /><circle cx="8" cy="10" r="3" fill="#fff" /><circle cx="16" cy="10" r="3" fill="#fff" /><circle cx="8" cy="10" r="1.300" fill="#111" /><circle cx="16" cy="10" r="1.300" fill="#111" /><path d="M12 12l-2 3h4z" fill="#f5a623" /></svg> },
  { d: <svg width="24" height="24" viewBox="0 0 24 24"><rect x="9" y="2" width="15" height="20" fill="#fff" /><path d="M12 6h9M12 9h9M12 12h9M12 15h9M12 18h9" stroke="#2b579a" /><path d="M0 3l14-3v24L0 21z" fill="#1d4e9e" /><text x="2" y="16" fontSize="10" fontWeight="700" fontFamily="Roboto" fill="#fff">W</text></svg>, dot: true },
  { d: <svg width="22" height="26" viewBox="0 0 22 26"><rect x="14" y="1" width="7" height="24" fill="#f2c811" /><rect x="7.500" y="8" width="7" height="17" fill="#e8b90f" /><rect x="1" y="15" width="7" height="10" fill="#d9a90e" /></svg>, dot: true },
  { d: <svg width="22" height="26" viewBox="0 0 22 26"><rect x="14" y="1" width="7" height="24" fill="#f2c811" /><rect x="7.500" y="8" width="7" height="17" fill="#e8b90f" /><rect x="1" y="15" width="7" height="10" fill="#d9a90e" /></svg>, active: true },
  { d: <svg width="26" height="26" viewBox="0 0 26 26"><circle cx="13" cy="13" r="12.500" fill="#e33b2e" /><path d="M13 13L2 19a12.500 12.500 0 0 0 13 6.300z" fill="#34a853" /><path d="M13 8h11.500a12.500 12.500 0 0 1-9.500 17.300z" fill="#fbbc05" /><circle cx="13" cy="13" r="5.500" fill="#fff" /><circle cx="13" cy="13" r="4.300" fill="#4285f4" /></svg>, dot: true },
  { d: <svg width="26" height="26" viewBox="0 0 26 26"><circle cx="13" cy="14" r="11.500" fill="#ff7139" /><path d="M5 6c2 3 4 2 7 1 2-3 5-6 5-6 0 3 1 4 4 6l3 7L13 8z" fill="#ffb32c" /><circle cx="13" cy="15" r="6.500" fill="#7b3fc7" /><path d="M9 12c3-2 7-1 8 3-3 1-6 0-8-3z" fill="#c84fc9" /></svg>, dot: true },
];

export default function App() {
  const bars = [[176, 443, 2], [246, 439, 5], [316, 433, 11], [386, 394, 50], [457, 338, 106], [527, 286, 158], [597, 252, 192]];
  const cats = [['Kids Bikes'], ['BMX', 'Bikes'], ['Hybrid', 'Bikes'], ['E-Bikes'], ['Touring', 'Bikes'], ['Road', 'Bikes'], ['Mountain', 'Bikes']];
  const ticks = [[262, '$60K'], [324, '$40K'], [384, '$20K'], [444, '$0K']];
  return (
    <Page>
      <Global />
      <TitleBar>
        <TitleIcon $w={18} $ml={15}>
          <svg width="16" height="16" viewBox="0 0 16 16"><P d="M1.500 1.500h10l3 3v10h-13zM4 1.500v4h6v-4M4 14.500v-5h8v5" c="#c8c6c4" /></svg>
        </TitleIcon>
        <TitleIcon $w={29} $h={31} $ml={7} $on>
          <svg width="16" height="16" viewBox="0 0 16 16"><P d="M2 2v5h5M2.500 7C5 3 14 3 14 9c0 3-3 5-6 5" c="#c8c6c4" /></svg>
        </TitleIcon>
        <TitleIcon $w={16} $ml={7}>
          <svg width="16" height="16" viewBox="0 0 16 16"><P d="M14 2v5H9M13.500 7C11 3 2 3 2 9c0 3 3 5 6 5" c="#c8c6c4" /></svg>
        </TitleIcon>
        <DocTitle>201402018&nbsp;&nbsp;•&nbsp;&nbsp;Last saved: Today at 9:05 AM<Caret /></DocTitle>
        <TopSearch>
          <svg width="16" height="16" viewBox="0 0 16 16"><P d="M1.500 14.500l4.500-4.500" c="#3b3a39" /><circle cx="9.500" cy="6.500" r="5" fill="none" stroke="#3b3a39" /></svg>
          Search
        </TopSearch>
        <TitleRight>
          <SignIn>Sign in</SignIn>
          <Avatar>
            <svg width="20" height="20" viewBox="0 0 20 20"><circle cx="10" cy="10" r="10" fill="#edebe9" /><circle cx="10" cy="6" r="3" fill="none" stroke="#201f1e" strokeWidth="1.300" /><path d="M3.500 10.500h13c0 4-3 6.500-6.500 6.500s-6.500-2.500-6.500-6.500z" fill="none" stroke="#201f1e" strokeWidth="1.300" /></svg>
          </Avatar>
          <WinBtn><svg width="12" height="12" viewBox="0 0 12 12"><path d="M1 6.500h10" stroke="#fff" /></svg></WinBtn>
          <WinBtn><svg width="12" height="12" viewBox="0 0 12 12"><P d="M1.500 3.500h7v7h-7zM3.500 3.500v-2h7v7h-2" c="#fff" /></svg></WinBtn>
          <WinBtn><svg width="12" height="12" viewBox="0 0 12 12"><P d="M1 1l10 10M11 1L1 11" c="#fff" /></svg></WinBtn>
        </TitleRight>
      </TitleBar>

      <TabBar>
        <Tab $w={46}>File</Tab>
        <Tab $w={88} $strong>Home<TabLine /></Tab>
        <Tab $w={48}>Insert</Tab>
        <Tab $w={108}>Modeling</Tab>
        <Tab $w={44}>View</Tab>
        <Tab $w={104}>Optimize</Tab>
        <Tab $w={44}>Help</Tab>
        <Tab $w={74} $ml={9} $ctx $strong>Format</Tab>
        <Tab $w={100} $ml={4} $ctx $strong>Data / Drill</Tab>
        <ShareBtn>
          <svg width="16" height="15" viewBox="0 0 16 15"><P d="M1 6v8h11v-3M4 11c0-4 3-6 7-6V2l4 4.500L11 10V7.500C8 7.500 6 8.500 4 11z" c="#fff" /></svg>
          Share
          <svg width="10" height="6" viewBox="0 0 10 6"><path d="M1 1l4 4 4-4" fill="none" stroke="#fff" /></svg>
        </ShareBtn>
      </TabBar>

      <Ribbon>
        <Group $w={161}>
          <Row $pl={4}>
            <RBtn $w={49} $off>{ribbonIcons.paste}<span>Paste</span></RBtn>
            <SmallCol>
              <SmallBtn><svg width="14" height="16" viewBox="0 0 14 16"><P d="M4 1l6 10M10 1L4 11" c="#484644" /><circle cx="3" cy="13" r="2" fill="none" stroke={BD} /><circle cx="11" cy="13" r="2" fill="none" stroke={BD} /></svg>Cut</SmallBtn>
              <SmallBtn><svg width="14" height="16" viewBox="0 0 14 16"><P d="M4.500 3.500V1h5l4 4v9H8M4 3.500H.5V15h7.500V7.500L6 3.500z" c="#484644" /></svg>Copy</SmallBtn>
              <SmallBtn><svg width="14" height="16" viewBox="0 0 14 16"><path d="M8 8l5-7 1 1-5 7z" fill="#605e5c" /><path d="M0 11c3 0 5-4 5-4l4 3c-2 4-5 5-7 5z" fill="#e8912d" stroke="#d9610c" strokeWidth=".6" /></svg>Format painter</SmallBtn>
            </SmallCol>
          </Row>
          <GroupLabel>Clipboard</GroupLabel>
        </Group>
        <Group $w={383}>
          <Row $pl={7}>
            <RibbonBtn w={42} icon="get" lines={['Get', 'data']} chev />
            <RibbonBtn w={56} icon="excel" lines={['Excel', 'workbook']} />
            <RibbonBtn w={76} icon="lake" lines={['OneLake data', 'hub']} chev />
            <RibbonBtn w={42} icon="sql" lines={['SQL', 'Server']} />
            <RibbonBtn w={38} icon="enter" lines={['Enter', 'data']} />
            <RibbonBtn w={58} icon="verse" lines={['Dataverse', '']} />
            <RibbonBtn w={54} icon="recent" lines={['Recent', 'sources']} chev />
          </Row>
          <GroupLabel>Data</GroupLabel>
        </Group>
        <Group $w={117}>
          <Row $pl={9}>
            <RibbonBtn w={56} icon="transform" lines={['Transform', 'data']} chev />
            <RibbonBtn w={44} icon="refresh" lines={['Refresh', '']} />
          </Row>
          <GroupLabel>Queries</GroupLabel>
        </Group>
        <Group $w={149}>
          <Row $pl={8}>
            <RibbonBtn w={40} icon="newv" lines={['New', 'visual']} />
            <RibbonBtn w={40} icon="text" lines={['Text', 'box']} />
            <RibbonBtn w={52} icon="more" lines={['More', 'visuals']} chev />
          </Row>
          <GroupLabel>Insert</GroupLabel>
        </Group>
        <Group $w={115}>
          <Row $pl={6}>
            <RibbonBtn w={50} icon="measure" lines={['New', 'measure']} />
            <RibbonBtn w={48} icon="quick" lines={['Quick', 'measure']} />
          </Row>
          <GroupLabel>Calculations</GroupLabel>
        </Group>
        <Group $w={73}>
          <Row $pl={6}>
            <RibbonBtn w={60} icon="sens" lines={['Sensitivity', '']} chev off />
          </Row>
          <GroupLabel>Sensitivity</GroupLabel>
        </Group>
        <Group $w={59}>
          <Row $pl={6}>
            <RibbonBtn w={46} icon="publish" lines={['Publish', '']} />
          </Row>
          <GroupLabel>Share</GroupLabel>
        </Group>
        <Collapse width="10" height="6" viewBox="0 0 10 6"><path d="M1 5l4-4 4 4" fill="none" stroke="#323130" strokeWidth="1.300" /></Collapse>
      </Ribbon>

      <Main>
        <Rail>
          <RailItem $on>
            <svg width="16" height="16" viewBox="0 0 16 16"><P d="M1.500 1v13.500H15M4.500 13V6h2v7zM8.500 13V8h2v5zM12.500 13V3h2v10z" c="#201f1e" /></svg>
          </RailItem>
          <RailItem>
            <svg width="16" height="16" viewBox="0 0 16 16"><P d="M.5 1.500h15v13H.5zM.5 5.500h15M.5 10h15M5.500 1.500v13M10.500 1.500v13" c="#797775" /></svg>
          </RailItem>
          <RailItem>
            <svg width="18" height="18" viewBox="0 0 18 18"><P d="M.5 5.500h6v6h-6zM7.500 1.500h7v4h-7zM7.500 8.500h7v3h-7zM7.500 13.500h7v4h-7zM6.500 8H7.500M7 3.500v12" c="#797775" /></svg>
          </RailItem>
        </Rail>
        <Center>
          <Work>
            <Canvas>
              <Clip>
                <Selection />
                <VisualCard>
                  <CardHead>
                    <CardTitle>Sum of Order Total, Sum of Order Quantity and Sum of Prod<br /><TitleLine2>Weight by Product Category</TitleLine2></CardTitle>
                    <HeadIcons>
                      <HeadIcon as="svg" width="18" height="18" viewBox="0 0 18 18"><P d="M1.500 2.500h15l-5.500 7v7l-4-2v-5z" c="#8a8886" /></HeadIcon>
                      <HeadIcon as="svg" width="8" height="18" viewBox="0 0 8 18"><path d="M3 6h1.500v1.500H3zM3 11h1.500v1.500H3z" fill="#605e5c" /></HeadIcon>
                      <HeadIcon as="svg" $ml={3} width="18" height="16" viewBox="0 0 18 16"><P d="M8 2.500H2v11h13V8M2 8.500h6v5M10 7l5-5M11 2h4v4" c="#8a8886" /></HeadIcon>
                      <HeadIcon as="svg" $ml={9} width="20" height="6" viewBox="0 0 20 6"><circle cx="5" cy="3" r="1" fill="#605e5c" /><circle cx="10" cy="3" r="1" fill="#605e5c" /><circle cx="15" cy="3" r="1" fill="#605e5c" /></HeadIcon>
                    </HeadIcons>
                  </CardHead>
                  <Chart viewBox="73 219 614 301">
                    {ticks.map(([y, t]) => (
                      <g key={t}>
                        <line x1="146" x2="686" y1={y + .5} y2={y + .5} stroke="#dcdcdc" strokeDasharray="1 6" />
                        <text x="136" y={y + 5} textAnchor="end" fontSize="13.500" fontFamily="Roboto" fill="#605e5c">{t}</text>
                      </g>
                    ))}
                    {bars.map(([x, y, h]) => <rect key={x} x={x} y={y} width="55" height={h} fill="#2c3768" />)}
                    {cats.map((c, i) => c.map((t, j) => (
                      <text key={t + i} x={204 + i * 70.200} y={473 + j * 20} textAnchor="middle" fontSize="13.500" fontFamily="Roboto" letterSpacing=".2" fill="#605e5c">{t}</text>
                    )))}
                    <text x="414" y="512" textAnchor="middle" fontSize="15.500" fontFamily="Roboto" letterSpacing=".83" fill="#252423">Product Category</text>
                    <text transform="translate(93.500 338) rotate(-90)" textAnchor="middle" fontSize="15.500" fontFamily="Roboto" letterSpacing=".83" fill="#252423">Sum of Order Total</text>
                  </Chart>
                </VisualCard>
                <TableVisual>
                  <TableHead>Count of Product</TableHead>
                  <TableRow /><TableRow /><TableRow /><TableRow $h={29} /><TableRow $h={28} /><TableRow /><TableRow /><TableRow /><TableRow />
                  <TableTotal />
                  <TotalCell>$</TotalCell>
                </TableVisual>
                <FloatTitle $x={715} $y={409}>Sum of Order Total by OrderDate</FloatTitle>
                <FloatTitle $x={16} $y={444}>Sum of Order Total by OrderDate</FloatTitle>
                <AxisLabel>$20K</AxisLabel>
                <GridDots />
                <Tip width="8" height="14" viewBox="0 0 8 14"><path d="M3.500 0h1L7 14H1z" fill="#d8d8d8" /></Tip>
                <BigNum>$4.0M</BigNum>
              </Clip>
              <VScroll />
              <HScroll />
            </Canvas>
            <FilterPane>
              <DoubleChev left />
              <FilterFunnel width="13" height="13" viewBox="0 0 13 13"><P d="M12.500 1v11L7 8H1V5h6z" c="#201f1e" /></FilterFunnel>
              <FilterLabel>Filters</FilterLabel>
            </FilterPane>
          </Work>
          <PageBar>
            <DeviceTab $w={24} $ml={10}>
              <svg width="20" height="16" viewBox="0 0 20 16"><P d="M.5.5h19v11H.5zM10 11.500v3M6 14.500h8" c="#605e5c" /></svg>
              <DeviceLine />
            </DeviceTab>
            <DeviceTab $w={14} $ml={25}>
              <svg width="13" height="21" viewBox="0 0 13 21"><P d="M1.500.5h10a1 1 0 0 1 1 1v18a1 1 0 0 1-1 1h-10a1 1 0 0 1-1-1v-18a1 1 0 0 1 1-1z" c="#605e5c" /><rect x="6" y="16" width="2" height="2" fill="#605e5c" /></svg>
            </DeviceTab>
            <NavArrows>
              <svg width="6" height="8" viewBox="0 0 6 8"><path d="M5 0v8L0 4z" fill="#c8c6c4" /></svg>
              <svg width="6" height="8" viewBox="0 0 6 8"><path d="M1 0v8l5-4z" fill="#c8c6c4" /></svg>
            </NavArrows>
            <PageTab>Page 1</PageTab>
            <AddTab>
              <svg width="12" height="12" viewBox="0 0 12 12"><path d="M4.500 1h3v3.500H11v3H7.500V11h-3V7.500H1v-3h3.500z" fill="#fff" /></svg>
            </AddTab>
          </PageBar>
        </Center>
        <VizPane>
          <PaneHead $pl={7}>Visualizations<DoubleChev /></PaneHead>
          <BuildLabel>Build visual</BuildLabel>
          <ModeRow>
            <ModeBtn $on>
              <svg width="26" height="26" viewBox="0 0 26 26" shapeRendering="crispEdges"><path d="M3 2.500h20" stroke="#323130" /><rect x="3" y="6" width="20" height="7" fill={GREEN} /><rect x="2.500" y="5.500" width="21" height="8" fill="none" stroke="#111" strokeDasharray="2 1" /><rect x="3" y="17" width="20" height="7" fill={GREEN} /><rect x="2.500" y="16.500" width="21" height="8" fill="none" stroke="#111" strokeDasharray="2 1" /></svg>
            </ModeBtn>
            <ModeBtn $ml={35}>
              <svg width="24" height="26" viewBox="0 0 24 26"><P d="M1.500 22V10h5V2h8v5h5v5M6.500 22V10M14.500 7v7" c="#484644" /><path d="M11 20c3-1 10-9 11-9l1 1c0 1-8 8-9 11-1 2-5 2-7 1 2-1 3-2 4-4z" fill="#fff" stroke="#484644" /></svg>
            </ModeBtn>
            <ModeBtn $ml={33}>
              <svg width="26" height="26" viewBox="0 0 26 26"><circle cx="11" cy="11" r="9.500" fill="none" stroke="#323130" /><P d="M18 18l6 6" c="#323130" w={2} /><P d="M2 13l5-4 4 3 7-6" c="#484644" /><path d="M6 14h2v5H6zM10 14h2v6h-2zM14 13h2v6h-2z" fill="#484644" /></svg>
            </ModeBtn>
          </ModeRow>
          <Notch viewBox="0 0 179 12"><path d="M0 11.500h15l7-7 7 7h150" fill="none" stroke="#c8c6c4" /></Notch>
          <VizGrid>
            {vizIcons.map((ic, i) => <VizCell key={i} $on={i === 32}>{ic}</VizCell>)}
          </VizGrid>
          <SectionHead>Drill through</SectionHead>
          <OptionRow>Cross-report<Toggle><Knob />Off</Toggle></OptionRow>
          <OptionRow>Keep all filters<Toggle $on>On<Knob $on /></Toggle></OptionRow>
          <DropBox>Add drill-through fields here</DropBox>
        </VizPane>
        <DataPane>
          <PaneHead $pl={8}>Data<DoubleChev /></PaneHead>
          <DataSearch>
            <svg width="14" height="14" viewBox="0 0 14 14"><circle cx="8.500" cy="5.500" r="4.500" fill="none" stroke="#484644" /><P d="M1 13l4.500-4.500" c="#484644" /></svg>
            Search
          </DataSearch>
          <Tree>
            {['Customers', 'Sales'].map(t => (
              <TreeRow key={t}>
                <svg width="7" height="10" viewBox="0 0 7 10"><path d="M1 1l4 4-4 4" fill="none" stroke="#605e5c" /></svg>
                <svg width="13" height="12" viewBox="0 0 13 12"><P d="M.5.5h12v11H.5zM.5 4h12M.5 8h12M4.500.5v11M8.500.5v11" c="#484644" /></svg>
                {t}
              </TreeRow>
            ))}
          </Tree>
        </DataPane>
      </Main>

      <Status>
        Page 1 of 1
        <ZoomBar>
          <svg width="6" height="6" viewBox="0 0 6 6"><path d="M1 3.500h4" stroke="#605e5c" strokeWidth="1.300" /></svg>
          <Slider><Thumb /></Slider>
          <svg width="9" height="9" viewBox="0 0 9 9"><path d="M0 4.500h8M4 .5v8" stroke="#605e5c" /></svg>
          <Pct>120%</Pct>
          <svg width="16" height="12" viewBox="0 0 16 12"><path d="M.5.5h15v11H.5z" fill="none" stroke="#8a6fa8" /><path d="M3 5V3h3M10 3h3v2M13 7v2h-3M6 9H3V7" fill="none" stroke="#484644" /></svg>
        </ZoomBar>
      </Status>

      <Taskbar>
        <Weather>
          <svg width="25" height="18" viewBox="0 0 25 18"><path d="M5 17a4.500 4.500 0 0 1-1-9 7 7 0 0 1 13-1 5 5 0 0 1 3 10z" fill="#a9ccf2" /></svg>
          <Badge $x={30} $y={8} $c="#f58a9b">1</Badge>
          <WeatherText>25°C<WeatherSub>Berawan</WeatherSub></WeatherText>
        </Weather>
        <StartBtn viewBox="0 0 24 24"><path d="M0 0h11.500v11.500H0zM12.500 0H24v11.500H12.500zM0 12.500h11.500V24H0zM12.500 12.500H24V24H12.500z" fill="#4fc3f7" /></StartBtn>
        <TaskSearch>
          <svg width="16" height="16" viewBox="0 0 16 16"><circle cx="7" cy="7" r="5.500" fill="none" stroke="#e0e0e0" /><path d="M11 11l4 4" stroke="#e0e0e0" /></svg>
          Search
          <SearchArt width="50" height="28" viewBox="0 0 50 28"><path d="M2 24l10-14 14-8 20 2 2 8-10 12-16 3z" fill="#8ab6d8" /><path d="M2 25l10-8h24l10 2-8 7H10z" fill="#a8b84a" /><ellipse cx="16" cy="17" rx="4" ry="8" fill="#9a9aa2" /><ellipse cx="27" cy="18" rx="4" ry="9" fill="#8c8c94" /><ellipse cx="38" cy="12" rx="3" ry="5" fill="#a2a2aa" /></SearchArt>
        </TaskSearch>
        <Dock>
          {dock.map((it, i) => (
            <DockItem key={i} $active={it.active}>
              {it.d}
              {it.badge && <Badge $x={it.bx} $y={6} $c="#f47c6a">{it.badge}</Badge>}
              {(it.dot || it.active) && <DockDot $active={it.active} />}
            </DockItem>
          ))}
        </Dock>
        <Tray>
          <TrayIcon><svg width="12" height="8" viewBox="0 0 12 8"><path d="M1 7l5-5 5 5" fill="none" stroke="#fff" strokeWidth="1.300" /></svg></TrayIcon>
          <TrayIcon $ml={8}><svg width="16" height="13" viewBox="0 0 16 13"><path d="M1 4.500c4-4 10-4 14 0M3 7c3-3 7-3 10 0M5.500 9.500c1.500-1.500 3.500-1.500 5 0" fill="none" stroke="#fff" /><circle cx="8" cy="11.500" r="1.200" fill="#fff" /></svg></TrayIcon>
          <TrayIcon><svg width="15" height="13" viewBox="0 0 15 13"><path d="M1 4.500v4h2.500L7 11.500v-10L3.500 4.500z" fill="none" stroke="#fff" /><path d="M10 4.500l4 4M14 4.500l-4 4" stroke="#fff" /></svg></TrayIcon>
          <TrayIcon><svg width="16" height="10" viewBox="0 0 16 10"><rect x=".5" y=".5" width="13" height="9" rx="1.500" fill="none" stroke="#fff" /><rect x="2" y="2" width="9" height="6" fill="#fff" /><rect x="14" y="3" width="1.500" height="4" fill="#fff" /></svg></TrayIcon>
          <Clock>09:28<br />22/12/2023</Clock>
          <TrayIcon $w={16} $ml={7}><svg width="15" height="16" viewBox="0 0 15 16"><path d="M7.500 0a1.500 1.500 0 0 1 1.500 1.500c2.500.7 3.500 3 3.500 5.500 0 2 1 3.500 2 5H.5c1-1.500 2-3 2-5 0-2.500 1-4.800 3.500-5.500A1.500 1.500 0 0 1 7.500 0zM5.500 13.500h4a2 2 0 0 1-4 0z" fill="#f4a07c" /></svg></TrayIcon>
        </Tray>
      </Taskbar>
    </Page>
  );
}
